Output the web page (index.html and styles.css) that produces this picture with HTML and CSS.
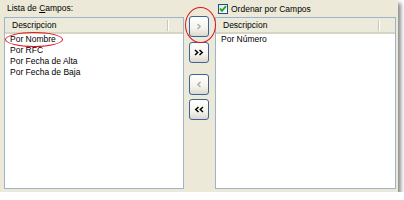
FILE: index.html
```html
<!DOCTYPE html>
<html lang="es">
  <head>
    <meta charset="UTF-8" />
    <meta name="viewport" content="width=device-width, initial-scale=1.0" />
    <title>Lista de Campos</title>
    <link rel="stylesheet" href="styles.css">
  </head>
  <body>
    <div class="dialog">
      <div class="caption">Lista de <u>C</u>ampos:</div>
      <div></div>
      <label class="check-row">
        <span class="checkbox">
          <svg width="8" height="8" viewBox="0 0 8 8">
            <polyline points="1,3.5 3,5.8 7,1.2" fill="none" stroke="#21a121" stroke-width="1.8" />
          </svg>
        </span>
        Ordenar por Campos
      </label>

      <div class="list">
        <div class="list-header"><span class="col">Descripcion</span></div>
        <div class="list-item">Por Nombre</div>
        <div class="list-item">Por RFC</div>
        <div class="list-item">Por Fecha de Alta</div>
        <div class="list-item">Por Fecha de Baja</div>
      </div>

      <div class="buttons">
        <button class="btn btn-add" disabled>
          <svg width="6" height="7" viewBox="0 0 6 7"><polyline points="1.5,1 4.2,3.5 1.5,6" fill="none" stroke="#aca899" stroke-width="1.2" /></svg>
        </button>
        <button class="btn btn-add-all">
          <svg width="10" height="7" viewBox="0 0 10 7"><polyline points="1,1 3.7,3.5 1,6" fill="none" stroke="#000" stroke-width="1.5" /><polyline points="5.5,1 8.2,3.5 5.5,6" fill="none" stroke="#000" stroke-width="1.5" /></svg>
        </button>
        <button class="btn btn-remove" disabled>
          <svg width="6" height="7" viewBox="0 0 6 7"><polyline points="4.5,1 1.8,3.5 4.5,6" fill="none" stroke="#aca899" stroke-width="1.2" /></svg>
        </button>
        <button class="btn btn-remove-all">
          <svg width="10" height="7" viewBox="0 0 10 7"><polyline points="4.5,1 1.8,3.5 4.5,6" fill="none" stroke="#000" stroke-width="1.5" /><polyline points="9,1 6.3,3.5 9,6" fill="none" stroke="#000" stroke-width="1.5" /></svg>
        </button>
      </div>

      <div class="list">
        <div class="list-header"><span class="col">Descripcion</span></div>
        <div class="list-item">Por Número</div>
      </div>

      <span class="mark mark-field"></span>
      <span class="mark mark-button"></span>
    </div>
  </body>
</html>
```

FILE: styles.css
```css
* {
  margin: 0;
  padding: 0;
  box-sizing: border-box;
}

body {
  background: #ffffff;
  font-family: "Liberation Sans", Arial, sans-serif;
  font-size: 8.5px;
  color: #000000;
}

.dialog {
  position: relative;
  width: 398px;
  height: 192px;
  padding-left: 4px;
  background: #ece9d8;
  box-shadow: 3px 3px 4px rgba(0, 0, 0, 0.45);
  display: grid;
  grid-template-columns: 180px 31px 181px;
  grid-template-rows: 17px 172px;
}

.caption {
  line-height: 17px;
  padding-left: 3px;
}

.caption u {
  text-decoration: underline;
}

.check-row {
  display: flex;
  align-items: center;
  gap: 3px;
  height: 16px;
  padding-left: 3px;
  padding-top: 1px;
}

.checkbox {
  width: 10px;
  height: 10px;
  border: 1px solid #1c5180;
  background: linear-gradient(135deg, #e4e3dd, #ffffff);
  display: flex;
  align-items: center;
  justify-content: center;
}

.list {
  background: #ffffff;
  border: 1px solid #9bb3cb;
}

.list-header {
  height: 16px;
  display: flex;
  background: #ebeadb;
  border-bottom: 2px solid #d8d4c4;
}

.list-header .col {
  width: 163px;
  padding-left: 7px;
  border-right: 1px solid #cbc7b8;
  box-shadow: 1px 0 0 #ffffff;
  margin: 2px 0 1px;
  line-height: 11px;
}

.list-item {
  line-height: 11px;
  padding-left: 5px;
}

.buttons {
  display: flex;
  flex-direction: column;
  padding-left: 5px;
  margin-top: -1px;
}

.btn {
  width: 20px;
  height: 21px;
  border: 1px solid #3e6395;
  border-radius: 3px;
  background: linear-gradient(#ffffff, #f4f3ee 60%, #dcd8cd);
  display: flex;
  align-items: center;
  justify-content: center;
}

.btn-add-all {
  margin-top: 5px;
}

.btn-remove {
  margin-top: 11px;
}

.btn-remove-all {
  margin-top: 4px;
}

/* red annotation rings */
.mark {
  position: absolute;
  border: 1.5px solid #e4131b;
  border-radius: 50%;
}

.mark-field {
  left: 5px;
  top: 32px;
  width: 58px;
  height: 15px;
}

.mark-button {
  left: 185px;
  top: 7px;
  width: 31px;
  height: 36px;
}
```
